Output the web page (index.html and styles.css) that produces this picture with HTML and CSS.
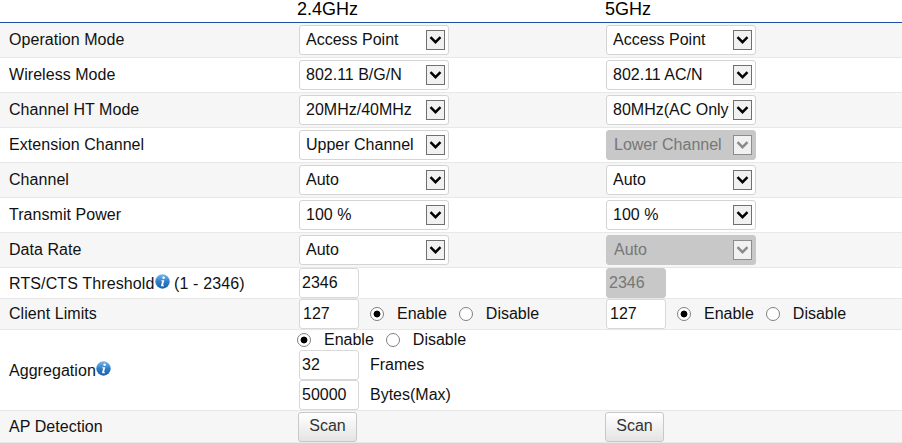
FILE: index.html
```html
<!DOCTYPE html>
<html lang="en">
<head>
<meta charset="utf-8">
<title>Wireless Settings</title>
<link rel="stylesheet" href="styles.css">
</head>
<body>
<svg class="defs" width="0" height="0" aria-hidden="true">
  <defs>
    <linearGradient id="infoGrad" x1="0" y1="0" x2="0" y2="1">
      <stop offset="0" stop-color="#7fb6e6"/>
      <stop offset="0.5" stop-color="#2f7fc8"/>
      <stop offset="1" stop-color="#1a5ea8"/>
    </linearGradient>
    <symbol id="info" viewBox="0 0 15 15">
      <circle cx="7.5" cy="7.5" r="7.2" fill="url(#infoGrad)"/>
      <circle cx="8.6" cy="3.7" r="1.25" fill="#fff"/>
      <path d="M6.3 6.2h3l-1.3 5h1v1H5.9l1.3-5h-1z" fill="#fff"/>
    </symbol>
    <symbol id="chev" viewBox="0 0 17 18">
      <path d="M3.5 6.2l5 5 5-5" fill="none" stroke="currentColor" stroke-width="2.4"/>
    </symbol>
  </defs>
</svg>
<table class="settings">
  <colgroup><col class="c-label"><col class="c-24"><col class="c-5"></colgroup>
  <thead>
    <tr class="head"><th></th><th>2.4GHz</th><th>5GHz</th></tr>
  </thead>
  <tbody>
    <tr class="r35">
      <td class="label">Operation Mode</td>
      <td><span class="sel"><select><option>Access Point</option></select><span class="arrow"><svg><use href="#chev"/></svg></span></span></td>
      <td><span class="sel"><select><option>Access Point</option></select><span class="arrow"><svg><use href="#chev"/></svg></span></span></td>
    </tr>
    <tr class="r35">
      <td class="label">Wireless Mode</td>
      <td><span class="sel"><select><option>802.11 B/G/N</option></select><span class="arrow"><svg><use href="#chev"/></svg></span></span></td>
      <td><span class="sel"><select><option>802.11 AC/N</option></select><span class="arrow"><svg><use href="#chev"/></svg></span></span></td>
    </tr>
    <tr class="r35">
      <td class="label">Channel HT Mode</td>
      <td><span class="sel"><select><option>20MHz/40MHz</option></select><span class="arrow"><svg><use href="#chev"/></svg></span></span></td>
      <td><span class="sel"><select><option>80MHz(AC Only)</option></select><span class="arrow"><svg><use href="#chev"/></svg></span></span></td>
    </tr>
    <tr class="r35">
      <td class="label">Extension Channel</td>
      <td><span class="sel"><select><option>Upper Channel</option></select><span class="arrow"><svg><use href="#chev"/></svg></span></span></td>
      <td><span class="sel"><select disabled><option>Lower Channel</option></select><span class="arrow off"><svg><use href="#chev"/></svg></span></span></td>
    </tr>
    <tr class="r35">
      <td class="label">Channel</td>
      <td><span class="sel"><select><option>Auto</option></select><span class="arrow"><svg><use href="#chev"/></svg></span></span></td>
      <td><span class="sel"><select><option>Auto</option></select><span class="arrow"><svg><use href="#chev"/></svg></span></span></td>
    </tr>
    <tr class="r35">
      <td class="label">Transmit Power</td>
      <td><span class="sel"><select><option>100 %</option></select><span class="arrow"><svg><use href="#chev"/></svg></span></span></td>
      <td><span class="sel"><select><option>100 %</option></select><span class="arrow"><svg><use href="#chev"/></svg></span></span></td>
    </tr>
    <tr class="r35">
      <td class="label">Data Rate</td>
      <td><span class="sel"><select><option>Auto</option></select><span class="arrow"><svg><use href="#chev"/></svg></span></span></td>
      <td><span class="sel"><select disabled><option>Auto</option></select><span class="arrow off"><svg><use href="#chev"/></svg></span></span></td>
    </tr>
    <tr class="r31">
      <td class="label wide">RTS/CTS Threshold<svg class="info"><use href="#info"/></svg> (1 - 2346)</td>
      <td><input class="num" type="text" value="2346"></td>
      <td><input class="num" type="text" value="2346" disabled></td>
    </tr>
    <tr class="r31">
      <td class="label">Client Limits</td>
      <td><div class="inline"><input class="num pad" type="text" value="127"><div class="radios after"><label><input type="radio" name="cl24" checked>Enable</label><label><input type="radio" name="cl24">Disable</label></div></div></td>
      <td><div class="inline"><input class="num pad" type="text" value="127"><div class="radios after"><label><input type="radio" name="cl5" checked>Enable</label><label><input type="radio" name="cl5">Disable</label></div></div></td>
    </tr>
    <tr class="r81">
      <td class="label">Aggregation<svg class="info"><use href="#info"/></svg></td>
      <td>
        <div class="radios top"><label><input type="radio" name="ag" checked>Enable</label><label><input type="radio" name="ag">Disable</label></div>
        <div class="inline"><input class="num" type="text" value="32"><span class="unit">Frames</span></div>
        <div class="inline"><input class="num" type="text" value="50000"><span class="unit">Bytes(Max)</span></div>
      </td>
      <td></td>
    </tr>
    <tr class="r32">
      <td class="label">AP Detection</td>
      <td><button class="scan" type="button">Scan</button></td>
      <td><button class="scan" type="button">Scan</button></td>
    </tr>
  </tbody>
</table>
</body>
</html>
```
FILE: styles.css
```css
html, body {
  margin: 0;
  padding: 0;
  background: #fff;
}
body {
  font-family: "Liberation Sans", Arial, sans-serif;
  font-size: 16px;
  color: #111;
  overflow: hidden;
}
.defs {
  position: absolute;
}
.settings {
  width: 902px;
  table-layout: fixed;
  border-collapse: separate;
  border-spacing: 0;
}
.c-label { width: 299px; }
.c-24 { width: 307px; }
.c-5 { width: 296px; }

.head th {
  height: 22px;
  padding: 0;
  font-size: 18px;
  font-weight: normal;
  text-align: left;
  vertical-align: top;
  line-height: 18px;
  border-bottom: 1px solid #1c4fa0;
  color: #000;
  text-indent: -2px;
}
.head th + th + th { text-indent: -1px; }

td {
  padding: 0;
  vertical-align: middle;
  border-bottom: 1px solid #e8e8e8;
}
tbody tr:nth-child(odd) { background: #f6f6f6; }
.r35 td { height: 34px; }
.r31 td { height: 30px; }
.r81 td { height: 80px; }
.r32 td { height: 31px; }
.label {
  padding-left: 9px;
  letter-spacing: 0.05px;
}
.label.wide { letter-spacing: 0.12px; }

.sel {
  position: relative;
  display: block;
  width: 150px;
  height: 30px;
}
select {
  appearance: none;
  -webkit-appearance: none;
  display: block;
  box-sizing: border-box;
  width: 150px;
  height: 30px;
  margin: 0;
  padding: 0 26px 2px 6px;
  font: 16px "Liberation Sans", Arial, sans-serif;
  color: #111;
  background: #fff;
  border: 1px solid #d4d4d4;
  border-radius: 3px;
  opacity: 1;
}
select:disabled {
  padding-left: 7px;
  color: #777;
  background: #c8c8c8;
  border-color: #c8c8c8;
}
.arrow {
  position: absolute;
  top: 5px;
  right: 4px;
  box-sizing: border-box;
  width: 19px;
  height: 20px;
  background: #f1f1f1;
  border: 1px solid #707070;
  color: #000;
  pointer-events: none;
}
.arrow svg {
  display: block;
  width: 17px;
  height: 18px;
}
.arrow.off {
  border-color: #8c8c8c;
  color: #8a8a8a;
}

.num {
  display: block;
  box-sizing: border-box;
  width: 60px;
  height: 30px;
  margin: 0;
  padding: 0 2px;
  font: 16px "Liberation Sans", Arial, sans-serif;
  color: #111;
  background: #fff;
  border: 1px solid #d8d8d8;
  border-radius: 3px;
  opacity: 1;
}
.num.pad { padding-left: 3px; }
.num:disabled {
  color: #777;
  background: #c8c8c8;
  border-color: #c8c8c8;
  -webkit-text-fill-color: #777;
}
.inline {
  display: flex;
  align-items: center;
}
.unit { margin-left: 11px; }

.radios {
  display: flex;
  align-items: center;
}
.radios label {
  display: flex;
  align-items: center;
}
.radios input {
  appearance: none;
  -webkit-appearance: none;
  box-sizing: border-box;
  width: 14px;
  height: 14px;
  margin: 0 13px 0 0;
  border: 1px solid #808080;
  border-radius: 50%;
  background: #fff;
}
.radios input:checked {
  background: radial-gradient(circle, #000 0, #000 3px, #fff 3.8px);
}
.radios label + label { margin-left: 12px; }
.radios.after { margin-left: 11px; }
.radios.top {
  height: 20px;
  margin-left: -2px;
}

.info {
  width: 15px;
  height: 15px;
  vertical-align: 0;
}

.scan {
  display: block;
  box-sizing: border-box;
  width: 59px;
  height: 30px;
  margin: 0 0 0 -1px;
  padding: 0 0 2px;
  font: 16px "Liberation Sans", Arial, sans-serif;
  color: #333;
  background: linear-gradient(#fff, #e4e4e4);
  border: 1px solid #c8c8c8;
  border-radius: 3px;
}
```
